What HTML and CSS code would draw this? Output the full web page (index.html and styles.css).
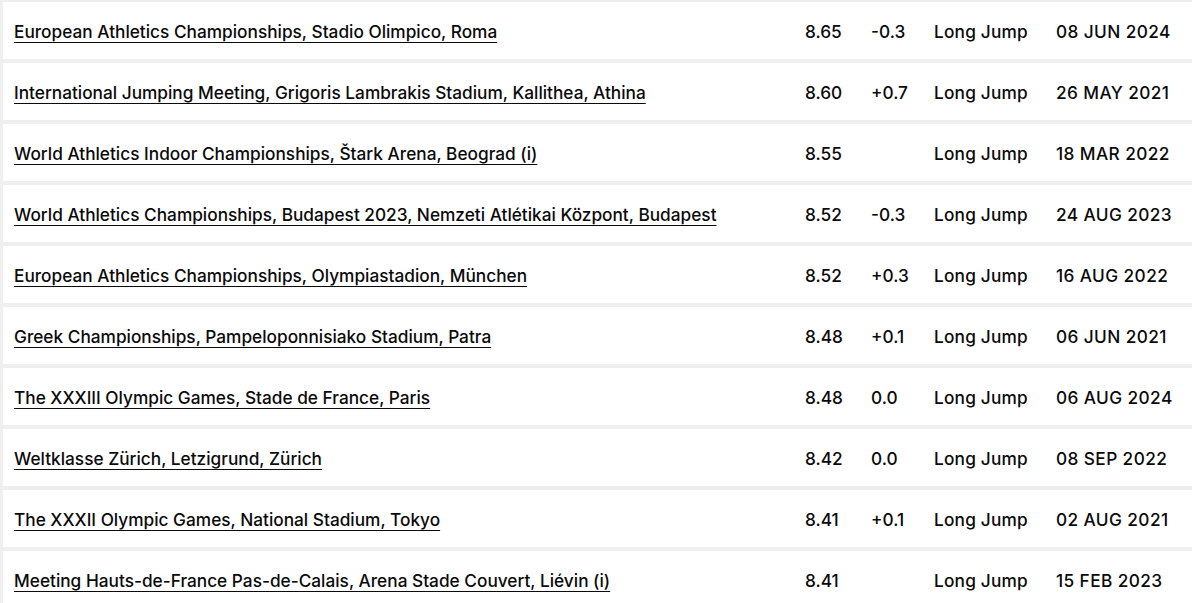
FILE: index.html
```html
<!DOCTYPE html>
<html>
<head>
<meta charset="utf-8">
<link rel="stylesheet" href="styles.css">
</head>
<body>
<div class="results">
  <div class="row"><a class="venue" href="#">European Athletics Championships, Stadio Olimpico, Roma</a><span class="mark">8.65</span><span class="wind">-0.3</span><span class="event">Long Jump</span><span class="date">08 JUN 2024</span></div>
  <div class="row"><a class="venue" href="#">International Jumping Meeting, Grigoris Lambrakis Stadium, Kallithea, Athina</a><span class="mark">8.60</span><span class="wind">+0.7</span><span class="event">Long Jump</span><span class="date">26 MAY 2021</span></div>
  <div class="row"><a class="venue" href="#">World Athletics Indoor Championships, Štark Arena, Beograd (i)</a><span class="mark">8.55</span><span class="wind"></span><span class="event">Long Jump</span><span class="date">18 MAR 2022</span></div>
  <div class="row"><a class="venue" href="#">World Athletics Championships, Budapest 2023, Nemzeti Atlétikai Központ, Budapest</a><span class="mark">8.52</span><span class="wind">-0.3</span><span class="event">Long Jump</span><span class="date">24 AUG 2023</span></div>
  <div class="row"><a class="venue" href="#">European Athletics Championships, Olympiastadion, München</a><span class="mark">8.52</span><span class="wind">+0.3</span><span class="event">Long Jump</span><span class="date">16 AUG 2022</span></div>
  <div class="row"><a class="venue" href="#">Greek Championships, Pampeloponnisiako Stadium, Patra</a><span class="mark">8.48</span><span class="wind">+0.1</span><span class="event">Long Jump</span><span class="date">06 JUN 2021</span></div>
  <div class="row"><a class="venue" href="#">The XXXIII Olympic Games, Stade de France, Paris</a><span class="mark">8.48</span><span class="wind">0.0</span><span class="event">Long Jump</span><span class="date">06 AUG 2024</span></div>
  <div class="row"><a class="venue" href="#">Weltklasse Zürich, Letzigrund, Zürich</a><span class="mark">8.42</span><span class="wind">0.0</span><span class="event">Long Jump</span><span class="date">08 SEP 2022</span></div>
  <div class="row"><a class="venue" href="#">The XXXII Olympic Games, National Stadium, Tokyo</a><span class="mark">8.41</span><span class="wind">+0.1</span><span class="event">Long Jump</span><span class="date">02 AUG 2021</span></div>
  <div class="row"><a class="venue" href="#">Meeting Hauts-de-France Pas-de-Calais, Arena Stade Couvert, Liévin (i)</a><span class="mark">8.41</span><span class="wind"></span><span class="event">Long Jump</span><span class="date">15 FEB 2023</span></div>
</div>
</body>
</html>
```

FILE: styles.css
```css
html, body {
  margin: 0;
  padding: 0;
  background: #efefef;
}
body {
  font-family: Inter, "Noto Sans", sans-serif;
  font-size: 17.25px;
  font-weight: 500;
  color: #0a0a0a;
  overflow: hidden;
}
.results {
  padding: 2px 0 0 3px;
  display: flex;
  flex-direction: column;
  gap: 4px;
}
.row {
  background: #fff;
  height: 57px;
  display: grid;
  grid-template-columns: 791px 66px 63px 122px 1fr;
  align-items: center;
  padding-left: 11px;
  padding-top: 2px;
  box-sizing: border-box;
  white-space: nowrap;
}
.venue {
  color: #0a0a0a;
  justify-self: start;
  text-decoration: underline;
  text-underline-offset: 4px;
  text-decoration-thickness: 1px;
}
.event {
  letter-spacing: 0.2px;
}
.date {
  letter-spacing: 0.4px;
}
```
